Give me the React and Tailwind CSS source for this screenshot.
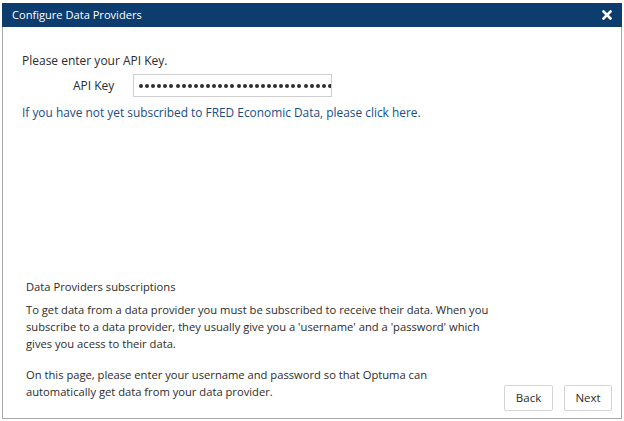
import React from "react";

const dots = Array.from({ length: 34 });

const App = () => {
  return (
    <div
      className="w-[624px] h-[421px] bg-white pt-[3px] pl-[2px] pr-[2px] pb-[2px]"
      style={{ fontFamily: '"Open Sans", "Liberation Sans", sans-serif' }}
    >
      <div className="flex flex-col h-full border-x border-b border-[#a9a9a9]">
        {/* Title bar */}
        <div className="flex items-center justify-between h-[24px] bg-[#0d3c6e] pl-[10px] pr-[10px] -mx-px">
          <span className="text-[11.1px] text-white">Configure Data Providers</span>
          <svg width="10" height="10" viewBox="0 0 10 10">
            <path d="M1.5 1.5 L8.5 8.5 M8.5 1.5 L1.5 8.5" stroke="white" strokeWidth="2.6" strokeLinecap="square" />
          </svg>
        </div>

        {/* API key section */}
        <div className="flex flex-col pl-[19px] pt-[25px] text-[#2b2b2b]">
          <p className="text-[12px] leading-[18px]">Please enter your API Key.</p>
          <div className="flex items-center mt-[4px]">
            <span className="w-[111px] pl-[51px] text-[12px]">API Key</span>
            <div className="flex items-center gap-[2.1px] w-[199px] h-[23px] border border-[#cfcfcf] pl-[5px] overflow-hidden">
              {dots.map((_, i) => (
                <span key={i} className="shrink-0 w-[4px] h-[4px] rounded-full bg-[#2e2e2e]" />
              ))}
            </div>
          </div>
          <a className="mt-[6px] text-[11.9px] leading-[18px] text-[#164e85] cursor-pointer">
            If you have not yet subscribed to FRED Economic Data, please click here.
          </a>
        </div>

        <div className="flex-1" />

        {/* Info + buttons */}
        <div className="flex items-end justify-between pl-[23px] pr-[9px] pb-[7px] text-[#2b2b2b]">
          <div className="w-[470px] text-[11.2px] leading-[17px] pb-[11px]">
            <p>Data Providers subscriptions</p>
            <p className="mt-[6px]">
              To get data from a data provider you must be subscribed to receive their data. When you
              subscribe to a data provider, they usually give you a 'username' and a 'password' which
              gives you acess to their data.
            </p>
            <p className="mt-[14px]">
              On this page, please enter your username and password so that Optuma can automatically get
              data from your data provider.
            </p>
          </div>
          <div className="flex gap-[11px]">
            <button className="w-[49px] h-[26px] border border-[#d5d5d5] rounded-[2px] bg-white text-[11.5px] text-[#2b2b2b]">
              Back
            </button>
            <button className="w-[48px] h-[26px] border border-[#d5d5d5] rounded-[2px] bg-white text-[11.5px] text-[#2b2b2b]">
              Next
            </button>
          </div>
        </div>
      </div>
    </div>
  );
};

export default App;
